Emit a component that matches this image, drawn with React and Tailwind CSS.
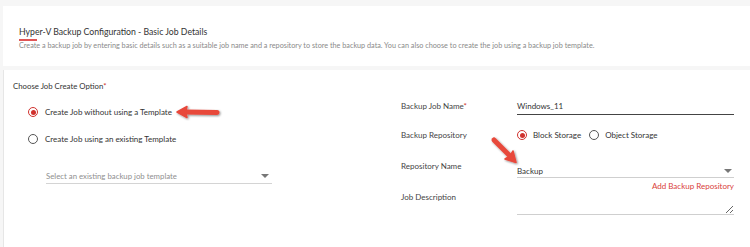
import React from 'react';

function Radio({ checked }) {
  return (
    <span
      className={`flex h-[10px] w-[10px] shrink-0 items-center justify-center rounded-full border ${
        checked ? 'border-[#d0312d]' : 'border-[#555]'
      }`}
    >
      {checked && <span className="h-[5px] w-[5px] rounded-full bg-[#d0312d]" />}
    </span>
  );
}

function Caret() {
  return (
    <svg width="8" height="5" viewBox="0 0 8 5" className="shrink-0">
      <path d="M0 0 L8 0 L4 4 Z" fill="#777" />
    </svg>
  );
}

function ArrowLeft() {
  return (
    <svg width="50" height="20" viewBox="0 0 50 20" className="absolute left-[173px] top-[103px]">
      <defs>
        <filter id="sh1" x="-20%" y="-40%" width="140%" height="180%">
          <feDropShadow dx="1" dy="1" stdDeviation="0.8" floodColor="#000" floodOpacity="0.45" />
        </filter>
      </defs>
      <g filter="url(#sh1)">
        <path d="M12 9 L44 9.5" stroke="#e8483b" strokeWidth="5" strokeLinecap="round" fill="none" />
        <path d="M4 9 L14 3.5 L12.5 9 L14 14.5 Z" fill="#e8483b" stroke="#e8483b" strokeWidth="1.5" strokeLinejoin="round" />
      </g>
    </svg>
  );
}

function ArrowDown() {
  return (
    <svg width="34" height="34" viewBox="0 0 34 34" className="absolute left-[487px] top-[134px]">
      <defs>
        <filter id="sh2" x="-30%" y="-30%" width="160%" height="160%">
          <feDropShadow dx="1" dy="1" stdDeviation="0.8" floodColor="#000" floodOpacity="0.45" />
        </filter>
      </defs>
      <g filter="url(#sh2)">
        <path d="M7 6 L23 22" stroke="#e8483b" strokeWidth="5" strokeLinecap="round" fill="none" />
        <path d="M29 28.5 L18 25 L23 22 L26 17 Z" fill="#e8483b" stroke="#e8483b" strokeWidth="1.5" strokeLinejoin="round" />
      </g>
    </svg>
  );
}

export default function App() {
  return (
    <div className="relative h-[247px] w-[750px] overflow-hidden bg-[#f6f6f6] pl-[3px] pt-[6px] font-['Lato','Noto_Sans',sans-serif] text-[#333]">
      {/* Header card */}
      <div className="h-[60px] bg-white pl-[16px] pt-[20px]">
        <h1 className="text-[8.7px] leading-[12px] text-[#333]">Hyper-V Backup Configuration - Basic Job Details</h1>
        <div className="mt-[1px] h-[2px] w-[18px] bg-[#e05555]" />
        <p className="text-[7.25px] leading-[10px] text-[#8a8a8a]">
          Create a backup job by entering basic details such as a suitable job name and a repository to store the backup data. You can also choose to create the job using a backup job template.
        </p>
      </div>

      {/* Form card */}
      <div className="mt-[4px] h-[200px] border-l border-[#e6e6e6] bg-white pt-[10px]">
        <div className="pl-[9px] text-[7.8px] leading-[12px] text-[#333]">
          Choose Job Create Option<span className="text-[#d0312d]">*</span>
        </div>

        <div className="flex">
          {/* Left column */}
          <div className="w-[397px]">
            <label className="mt-[13px] flex h-[14px] items-center pl-[24px] text-[8px]">
              <Radio checked />
              <span className="ml-[7px]">Create Job without using a Template</span>
            </label>
            <label className="mt-[13px] flex h-[14px] items-center pl-[24px] text-[8px]">
              <Radio />
              <span className="ml-[7px]">Create Job using an existing Template</span>
            </label>
            <div className="ml-[42px] mt-[24px] flex w-[226px] items-center justify-between border-b border-[#d4d4d4] pb-[1px] pr-[3px]">
              <span className="text-[7.8px] leading-[12px] text-[#8f8f8f]">Select an existing backup job template</span>
              <Caret />
            </div>
          </div>

          {/* Right column */}
          <div className="text-[8px]">
            <div className="mt-[8px] flex">
              <div className="w-[116px] leading-[12px] text-[#444]">
                Backup Job Name<span className="text-[#d0312d]">*</span>
              </div>
              <div className="w-[217px] border-b border-[#444] pb-[2px] leading-[12px] text-[#333]">Windows_11</div>
            </div>

            <div className="mt-[14px] flex items-center">
              <div className="w-[116px] leading-[12px] text-[#444]">Backup Repository</div>
              <div className="flex items-center">
                <Radio checked />
                <span className="ml-[6px] leading-[12px]">Block Storage</span>
                <span className="ml-[8px]">
                  <Radio />
                </span>
                <span className="ml-[6px] leading-[12px]">Object Storage</span>
              </div>
            </div>

            <div className="mt-[19px] flex">
              <div className="w-[116px] leading-[12px] text-[#444]">Repository Name</div>
              <div className="w-[217px]">
                <div className="mt-[5px] flex items-center justify-between border-b border-[#cfcfcf] pr-[2px]">
                  <span className="leading-[12px]">Backup</span>
                  <Caret />
                </div>
                <div className="mt-[2px] text-right leading-[12px] text-[#d9413b]">Add Backup Repository</div>
              </div>
            </div>

            <div className="-mt-px flex">
              <div className="w-[116px] leading-[12px] text-[#444]">Job Description</div>
              <textarea
                className="h-[24px] w-[217px] border-0 border-b border-[#cfcfcf] bg-transparent p-0 text-[8px] outline-none"
                defaultValue=""
              />
            </div>
          </div>
        </div>
      </div>

      <ArrowLeft />
      <ArrowDown />
    </div>
  );
}
